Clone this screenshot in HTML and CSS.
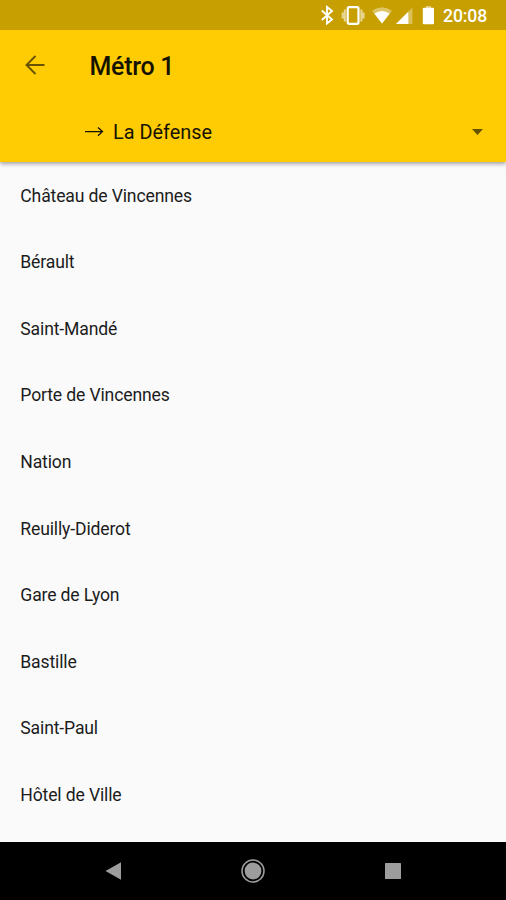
FILE: index.html
```html
<!DOCTYPE html>
<html lang="fr">
<head>
  <meta charset="UTF-8">
  <title>Métro 1</title>
  <link rel="stylesheet" href="styles.css">
</head>
<body>
  <div class="status-bar">
    <svg class="status-icons" width="116" height="30" viewBox="320 0 116 30">
      <!-- bluetooth -->
      <path d="M321.8 10.5L332 19.5L327 23.5V7L332 11L321.8 20" fill="none" stroke="#fff" stroke-width="1.9"/>
      <!-- vibrate -->
      <rect x="347.7" y="7.2" width="10.8" height="16.6" rx="1.5" fill="none" stroke="#fff" stroke-width="2.2"/>
      <path d="M344.8 9.5V21.5M361.4 9.5V21.5M342.7 12.5V18.5M363.5 12.5V18.5" stroke="#fff" stroke-opacity=".6" stroke-width="2"/>
      <!-- wifi -->
      <path d="M382 23.5L372 10.8Q382 3.6 392 10.8Z" fill="#fff" fill-opacity=".4"/>
      <path d="M382 23.5L374.3 13.4Q382 8.4 389.7 13.4Z" fill="#fff"/>
      <!-- signal -->
      <path d="M396 24L412.4 7.6V24Z" fill="#fff" fill-opacity=".35"/>
      <path d="M396 24L408.3 11.7V24Z" fill="#fff"/>
      <!-- battery -->
      <path d="M426 6H431V8H426Z" fill="#fff" fill-opacity=".5"/>
      <rect x="422.8" y="7.8" width="11.2" height="16.4" rx="1" fill="#fff"/>
    </svg>
    <span class="clock">20:08</span>
  </div>

  <header class="app-bar">
    <div class="toolbar">
      <svg class="back" width="22" height="22" viewBox="0 0 22 22">
        <path d="M20.5 11H2.8M11.5 2L2.5 11L11.5 20" fill="none" stroke="currentColor" stroke-width="1.9"/>
      </svg>
      <h1>Métro 1</h1>
    </div>
    <div class="direction">
      <svg class="arrow" width="20" height="12" viewBox="0 0 20 12">
        <path d="M1 5.6H18.3M14 1.4L18.5 5.6L14 9.8" fill="none" stroke="currentColor" stroke-width="1.3"/>
      </svg>
      <span>La Défense</span>
      <svg class="caret" width="11" height="6" viewBox="0 0 11 6">
        <path d="M0 0H11L5.5 6Z" fill="currentColor"/>
      </svg>
    </div>
  </header>

  <ul class="stations">
    <li>Château de Vincennes</li>
    <li>Bérault</li>
    <li>Saint-Mandé</li>
    <li>Porte de Vincennes</li>
    <li>Nation</li>
    <li>Reuilly-Diderot</li>
    <li>Gare de Lyon</li>
    <li>Bastille</li>
    <li>Saint-Paul</li>
    <li>Hôtel de Ville</li>
  </ul>

  <nav class="nav-bar">
    <svg width="24" height="24" viewBox="0 0 24 24"><path d="M4.5 12L20 3.2V20.8Z" fill="currentColor"/></svg>
    <svg width="24" height="24" viewBox="0 0 24 24">
      <circle cx="12" cy="12" r="11" fill="none" stroke="currentColor" stroke-width="1.5"/>
      <circle cx="12" cy="12" r="8.4" fill="currentColor"/>
    </svg>
    <svg width="24" height="24" viewBox="0 0 24 24"><rect x="4" y="4" width="16" height="16" rx="0.5" fill="currentColor"/></svg>
  </nav>
</body>
</html>
```

FILE: styles.css
```css
* {
  box-sizing: border-box;
}
body {
  margin: 0;
  height: 900px;
  display: flex;
  flex-direction: column;
  overflow: hidden;
  background: #fafafa;
  font-family: Roboto, sans-serif;
  color: #1c1c1c;
}
.status-bar {
  height: 30px;
  flex: none;
  display: flex;
  align-items: center;
  justify-content: flex-end;
  padding-right: 18px;
  background: #c79f00;
  color: #fff;
}
.clock {
  width: 45px;
  margin-left: 7px;
  padding-top: 2px;
  font-size: 17.6px;
  font-weight: 500;
  letter-spacing: -0.1px;
  line-height: 20px;
}
.app-bar {
  height: 132px;
  flex: none;
  background: #ffcc03;
  color: #161200;
  box-shadow: 0 2px 4px rgba(0,0,0,0.35);
  clip-path: inset(0 0 -8px 0);
}
.toolbar {
  height: 72px;
  display: flex;
  align-items: center;
  padding-left: 24px;
}
.back {
  color: #665200;
  margin-top: -2px;
}
.toolbar h1 {
  margin: 0 0 0 43.5px;
  font-size: 25px;
  font-weight: 500;
  letter-spacing: -0.3px;
}
.direction {
  height: 60px;
  display: flex;
  align-items: center;
  padding: 0 23px 0 84px;
  font-size: 19.9px;
}
.direction .arrow {
  margin-right: 9px;
}
.direction .caret {
  margin-left: auto;
  color: #665200;
}
.stations {
  flex: 1;
  margin: 0;
  padding: 0;
  list-style: none;
  overflow: hidden;
}
.stations li {
  height: 66.55px;
  display: flex;
  align-items: center;
  padding-left: 20.3px;
  font-size: 17.6px;
  letter-spacing: -0.15px;
}
.stations li:first-child {
  margin-top: 0.5px;
}
.nav-bar {
  height: 58px;
  flex: none;
  display: flex;
  justify-content: space-between;
  align-items: center;
  padding: 0 101px;
  background: #000;
  color: #9d9d9d;
}
```
